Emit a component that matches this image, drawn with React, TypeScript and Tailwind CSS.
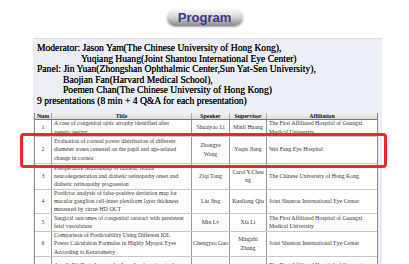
import React from "react";

const rows: { n: string; h: string; title: string; sp: React.ReactNode; su: React.ReactNode; af: string }[] = [
  { n: "1", h: "h-[17px]", title: "A case of congenital optic atrophy identified after genetic testing", sp: "Shuaiyao Li", su: "Minli Huang", af: "The First Affiliated Hospital of Guangxi Medical University" },
  { n: "2", h: "h-[27px]", title: "Evaluation of corneal power distribution of different diameter zones centered on the pupil and age-related change in cornea", sp: (<>Zhongye<br />Wang</>), su: "Yaqin Jiang", af: "Wei Fang Eye Hospital" },
  { n: "3", h: "h-[26px]", title: "Preoperative relationship of diabetic retinal neurodegeneration and diabetic retinopathy onset and diabetic retinopathy progression", sp: "Ziqi Tong", su: (<>Carol Y.Cheu<br />ng</>), af: "The Chinese University of Hong Kong" },
  { n: "4", h: "h-[24px]", title: "Predictor analysis of false-positive deviation map for macular ganglion cell-inner plexiform layer thickness measured by cirrus HD OCT", sp: "Liu Jing", su: "Kunliang Qiu", af: "Joint Shantou International Eye Center" },
  { n: "5", h: "h-[18px]", title: "Surgical outcomes of congenital cataract with persistent fetal vasculature", sp: "Min Lv", su: "Xia Li", af: "The First Affiliated Hospital of Guangxi Medical University" },
  { n: "6", h: "h-[25px]", title: "Comparison of Predictability Using Different IOL Power Calculation Formulas in Highly Myopic Eyes According to Keratometry", sp: "Chengyao Guo", su: (<>Mingzhi<br />Zhang</>), af: "Joint Shantou International Eye Center" },
  { n: "7", h: "h-[26px]", title: "AcrySoF® Toric Intraocular Lens Implantation in the Treatment of Astigmatism with Cataract", sp: "Li Wei", su: "Min Li", af: "The First Affiliated Hospital of Guangxi Medical University" },
];

export default function App() {
  return (
    <div className="relative w-[409px] h-[264px] overflow-hidden bg-white">
      <div className="flex justify-center pt-[9px]">
        <div className="flex h-[17px] w-[76px] items-center justify-center rounded-full bg-gradient-to-b from-[#fafafa] via-[#d2d2d2] to-[#888] shadow-[0_1px_2px_rgba(0,0,0,0.35)]">
          <span className="text-[13px] font-bold leading-none text-[#3b3789]" style={{ fontFamily: "'Liberation Sans', Arial, sans-serif" }}>Program</span>
        </div>
      </div>
      <div className="ml-[33px] mt-[12px] h-[300px] w-[349px] border-t border-[#dcdce4] bg-[#eceef6] pt-[4px]">
        <div className="pl-[4px] text-[9.6px] leading-[10.6px] text-[#111] [text-shadow:0_0_0.4px_#000]" style={{ fontFamily: "'Liberation Serif', 'Times New Roman', serif" }}>
          <div>Moderator: Jason Yam(The Chinese University of Hong Kong),</div>
          <div className="pl-[44px]">Yuqiang Huang(Joint Shantou International Eye Center)</div>
          <div>Panel: Jin Yuan(Zhongshan Ophthalmic Center,Sun Yat-Sen University),</div>
          <div className="pl-[26px]">Baojian Fan(Harvard Medical School),</div>
          <div className="pl-[26px]">Poemen Chan(The Chinese University of Hong Kong)</div>
          <div>9 presentations (8 min + 4 Q&amp;A for each presentation)</div>
        </div>
        <div className="ml-[1px] mt-[6px] w-[344px] border-l border-r border-[#8a8a8a] bg-white text-[5.8px] text-[#333]" style={{ fontFamily: "'Liberation Serif', 'Times New Roman', serif" }}>
          <div className="grid h-[7px] grid-cols-[17px_140px_38px_37px_1fr] border-b border-[#777] bg-gradient-to-b from-[#f2f2f2] to-[#dcdcdc] font-bold leading-[6px] text-[#111]">
            <div className="flex items-center justify-center border-r border-[#aaa]">Num</div>
            <div className="flex items-center justify-center border-r border-[#aaa]">Title</div>
            <div className="flex items-center justify-center border-r border-[#aaa]">Speaker</div>
            <div className="flex items-center justify-center border-r border-[#aaa]">Supervisor</div>
            <div className="flex items-center justify-center">Affiliation</div>
          </div>
          {rows.map((r) => (
            <div key={r.n} className={`grid ${r.h} grid-cols-[17px_140px_38px_37px_1fr] border-b border-[#c8c8c8] leading-[8.3px]`}>
              <div className="flex items-center justify-center border-r border-[#999]">{r.n}</div>
              <div className="flex items-center overflow-hidden border-r border-[#999] pl-[2px] pr-[6px]">{r.title}</div>
              <div className="flex items-center justify-center overflow-hidden whitespace-nowrap border-r border-[#999] text-center">{r.sp}</div>
              <div className="flex items-center justify-center overflow-hidden whitespace-nowrap border-r border-[#999] text-center">{r.su}</div>
              <div className="flex items-center overflow-hidden pl-[2px] pr-[8px]">{r.af}</div>
            </div>
          ))}
        </div>
      </div>
      <div className="pointer-events-none absolute left-[20px] top-[133px] h-[35px] w-[367px] rounded-[4px] border-[3px] border-[#f0262a]" />
    </div>
  );
}
